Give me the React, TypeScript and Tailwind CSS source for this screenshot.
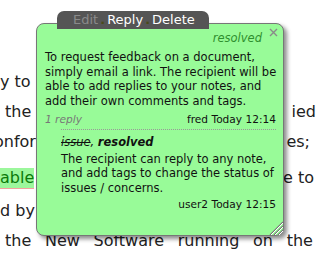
export default function App() {
  return (
    <div className="relative w-[318px] h-[268px] overflow-hidden bg-white font-['DejaVu_Sans',sans-serif]">
      {/* page text behind the note */}
      <div className="flex flex-col text-[16px] leading-[20px] text-[#222]">
        <div className="mt-[72px] flex justify-between">
          <span>y to</span>
          <span />
        </div>
        <div className="mt-[10px] flex justify-between pl-[5px] pr-[2px]">
          <span>the</span>
          <span>ied</span>
        </div>
        <div className="mt-[10px] flex justify-between pr-[8px]">
          <span className="ml-[-6px]">onfor</span>
          <span>es;</span>
        </div>
        <div className="mt-[16px] flex justify-between pr-[4px]">
          <span className="ml-[-5px] pl-[5px] bg-[#9cf79c] text-[#0a7a0a] border-b border-[#f4a0a0]">able</span>
          <span>e to</span>
        </div>
        <div className="mt-[12px] flex justify-between">
          <span>d by</span>
          <span />
        </div>
        <div className="mt-[10px] flex justify-between pl-[5px] pr-[5px]">
          <span>the</span>
          <span>New</span>
          <span>Software</span>
          <span>running</span>
          <span>on</span>
          <span>the</span>
        </div>
      </div>

      {/* note popup */}
      <div className="absolute left-[36px] top-[23px] w-[248px] h-[213px] rounded-[8px] border border-[#777] bg-[#98fb98] shadow-[3px_3px_4px_rgba(0,0,0,0.45)] pl-[8px] pr-[7px] pt-[7px] text-[11.5px] text-[#111] whitespace-nowrap">
        <svg className="absolute right-[5px] top-[4px]" width="9" height="9" viewBox="0 0 9 9">
          <path d="M1 1 L8 8 M8 1 L1 8" stroke="#8a8a8a" strokeWidth="1.4" />
        </svg>
        <div className="text-right pr-[14px] leading-[14px] italic text-[#2f8f2f]">resolved</div>
        <div className="mt-[5px] leading-[14.5px]">
          To request feedback on a document,<br />
          simply email a link. The recipient will be<br />
          able to add replies to your notes, and<br />
          add their own comments and tags.
        </div>
        <div className="mt-[3.5px] flex justify-between items-baseline leading-[14px] text-[10.6px]">
          <span className="italic text-[#777]">1 reply</span>
          <span>fred Today 12:14</span>
        </div>
        <div className="ml-[16px] mt-[3px] border-t border-dotted border-[#999]">
          <div className="pt-[5px] leading-[14px] italic">
            <span className="line-through">issue</span>, <span className="font-bold">resolved</span>
          </div>
          <div className="mt-[3px] leading-[14.5px]">
            The recipient can reply to any note,<br />
            and add tags to change the status of<br />
            issues / concerns.
          </div>
          <div className="mt-[1.5px] text-right leading-[14px] text-[10.6px]">user2 Today 12:15</div>
        </div>
        <svg className="absolute right-0 bottom-0" width="15" height="15" viewBox="0 0 15 15">
          <path d="M2 15 L15 2 M6 15 L15 6 M10 15 L15 10" stroke="#777" strokeWidth="1.2" />
          <path d="M3 15 L15 3 M7 15 L15 7 M11 15 L15 11" stroke="#fff" strokeWidth="1" />
        </svg>
      </div>

      {/* toolbar tab */}
      <div className="absolute left-[57px] top-[11px] w-[152px] h-[18px] rounded-t-[7px] bg-[#555] flex items-center pl-[16px] text-[13px] leading-[18px]">
        <span className="text-[#8a8a8a]">Edit</span>
        <span className="mx-[2px] text-[#4a4a18] font-bold">.</span>
        <span className="text-white">Reply</span>
        <span className="mx-[2px] text-[#4a4a18] font-bold">.</span>
        <span className="text-white">Delete</span>
      </div>
    </div>
  );
}
